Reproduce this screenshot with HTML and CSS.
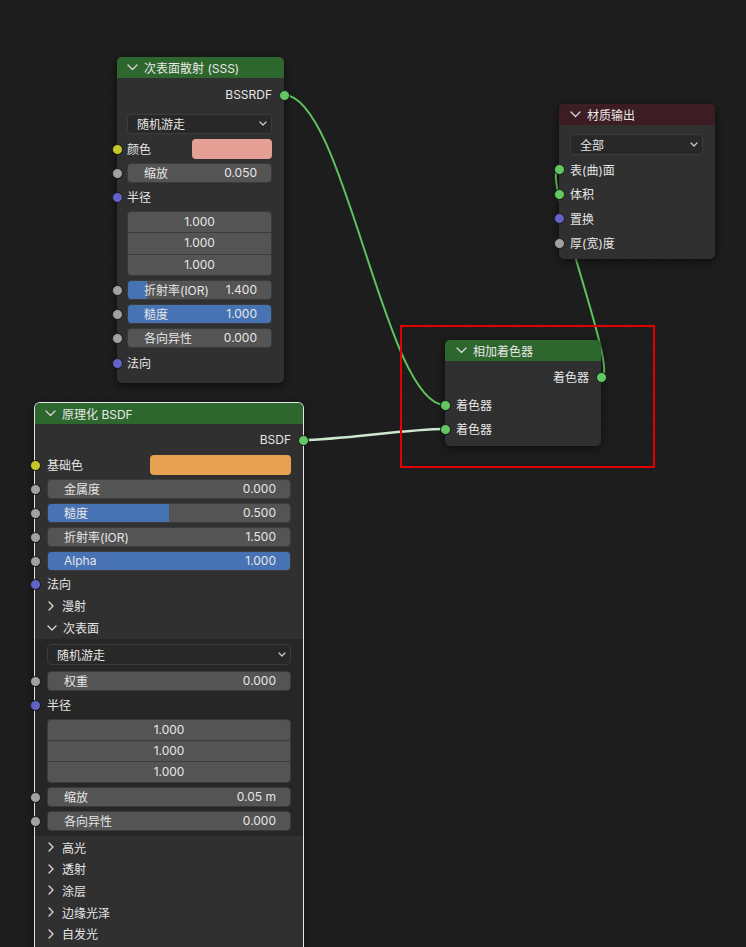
FILE: index.html
```html
<!DOCTYPE html>
<html lang="zh">
<head>
<meta charset="utf-8">
<title>Shader Nodes</title>
<link rel="stylesheet" href="styles.css">
</head>
<body>
<div class="canvas">
  <svg class="links" width="746" height="947" viewBox="0 0 746 947">
    <path class="link" d="M284 95 C344 95 385 405 445 405"/>
    <path class="link sel" d="M302 440 C342 440 405 429 445 429"/>
    <path class="link" d="M601 377 C621 377 539 169 559 169"/>
  </svg>

  <div class="frame-mark"></div>

  <!-- SSS node -->
  <div class="node n-sss">
    <div class="head">
      <svg class="chev-down" width="11" height="7" viewBox="0 0 11 7"><polyline points="1,1 5.5,5.5 10,1"/></svg>
      <span>次表面散射 (SSS)</span>
    </div>
    <div class="body">
      <div class="row right tall"><span>BSSRDF</span><i class="sock r green"></i></div>
      <div class="row mt4"><div class="drop"><span>随机游走</span><svg class="dd" width="8" height="5" viewBox="0 0 8 5"><polyline points="1,1 4,4 7,1"/></svg></div></div>
      <div class="row mt1"><i class="sock yellow"></i><span>颜色</span><span class="swatch sw-sss"></span></div>
      <div class="row"><i class="sock gray"></i><div class="field"><span>缩放</span><span>0.050</span></div></div>
      <div class="row"><i class="sock purple"></i><span>半径</span></div>
      <div class="vec"><div>1.000</div><div>1.000</div><div>1.000</div></div>
      <div class="row"><i class="sock gray"></i><div class="field" style="--p:13%"><span>折射率(IOR)</span><span>1.400</span></div></div>
      <div class="row"><i class="sock gray"></i><div class="field" style="--p:100%"><span>糙度</span><span>1.000</span></div></div>
      <div class="row"><i class="sock gray"></i><div class="field"><span>各向异性</span><span>0.000</span></div></div>
      <div class="row mt1"><i class="sock purple"></i><span>法向</span></div>
    </div>
  </div>

  <!-- Material output -->
  <div class="node n-out">
    <div class="head out">
      <svg class="chev-down" width="11" height="7" viewBox="0 0 11 7"><polyline points="1,1 5.5,5.5 10,1"/></svg>
      <span>材质输出</span>
    </div>
    <div class="body">
      <div class="row h21"><div class="drop"><span>全部</span><svg class="dd" width="8" height="5" viewBox="0 0 8 5"><polyline points="1,1 4,4 7,1"/></svg></div></div>
      <div class="row"><i class="sock green"></i><span>表(曲)面</span></div>
      <div class="row"><i class="sock green"></i><span>体积</span></div>
      <div class="row"><i class="sock purple"></i><span>置换</span></div>
      <div class="row"><i class="sock gray"></i><span>厚(宽)度</span></div>
    </div>
  </div>

  <!-- Add shader -->
  <div class="node n-add">
    <div class="head">
      <svg class="chev-down" width="11" height="7" viewBox="0 0 11 7"><polyline points="1,1 5.5,5.5 10,1"/></svg>
      <span>相加着色器</span>
    </div>
    <div class="body">
      <div class="row right"><span>着色器</span><i class="sock r green"></i></div>
      <div class="row mt4"><i class="sock green"></i><span>着色器</span></div>
      <div class="row"><i class="sock green"></i><span>着色器</span></div>
    </div>
  </div>

  <!-- Principled BSDF -->
  <div class="node n-bsdf selected">
    <div class="head">
      <svg class="chev-down" width="11" height="7" viewBox="0 0 11 7"><polyline points="1,1 5.5,5.5 10,1"/></svg>
      <span>原理化 BSDF</span>
    </div>
    <div class="body">
      <div class="row right"><span>BSDF</span><i class="sock r green"></i></div>
      <div class="row mt1"><i class="sock yellow"></i><span>基础色</span><span class="swatch sw-base"></span></div>
      <div class="row"><i class="sock gray"></i><div class="field"><span>金属度</span><span>0.000</span></div></div>
      <div class="row"><i class="sock gray"></i><div class="field" style="--p:50%"><span>糙度</span><span>0.500</span></div></div>
      <div class="row"><i class="sock gray"></i><div class="field"><span>折射率(IOR)</span><span>1.500</span></div></div>
      <div class="row"><i class="sock gray"></i><div class="field" style="--p:100%"><span>Alpha</span><span>1.000</span></div></div>
      <div class="row short"><i class="sock purple"></i><span>法向</span></div>
      <div class="row short ph"><svg class="chev-right" width="6" height="10" viewBox="0 0 6 10"><polyline points="1,1 5,5 1,9"/></svg><span>漫射</span></div>
      <div class="row short ph"><svg class="chev-open" width="10" height="6" viewBox="0 0 10 6"><polyline points="1,1 5,5 9,1"/></svg><span>次表面</span></div>
      <div class="panel">
        <div class="row h21"><div class="drop"><span>随机游走</span><svg class="dd" width="8" height="5" viewBox="0 0 8 5"><polyline points="1,1 4,4 7,1"/></svg></div></div>
        <div class="row mt2"><i class="sock gray"></i><div class="field"><span>权重</span><span>0.000</span></div></div>
        <div class="row"><i class="sock purple"></i><span>半径</span></div>
        <div class="vec v64"><div>1.000</div><div>1.000</div><div>1.000</div></div>
        <div class="row"><i class="sock gray"></i><div class="field"><span>缩放</span><span>0.05 m</span></div></div>
        <div class="row"><i class="sock gray"></i><div class="field"><span>各向异性</span><span>0.000</span></div></div>
      </div>
      <div class="ph-group">
        <div class="row ph"><svg class="chev-right" width="6" height="10" viewBox="0 0 6 10"><polyline points="1,1 5,5 1,9"/></svg><span>高光</span></div>
        <div class="row ph"><svg class="chev-right" width="6" height="10" viewBox="0 0 6 10"><polyline points="1,1 5,5 1,9"/></svg><span>透射</span></div>
        <div class="row ph"><svg class="chev-right" width="6" height="10" viewBox="0 0 6 10"><polyline points="1,1 5,5 1,9"/></svg><span>涂层</span></div>
        <div class="row ph"><svg class="chev-right" width="6" height="10" viewBox="0 0 6 10"><polyline points="1,1 5,5 1,9"/></svg><span>边缘光泽</span></div>
        <div class="row ph"><svg class="chev-right" width="6" height="10" viewBox="0 0 6 10"><polyline points="1,1 5,5 1,9"/></svg><span>自发光</span></div>
      </div>
    </div>
  </div>
</div>
</body>
</html>
```

FILE: styles.css
```css
* { box-sizing: border-box; margin: 0; padding: 0; }

html, body {
  width: 746px;
  height: 947px;
  overflow: hidden;
  background: #1d1d1d;
}

body {
  font-family: Inter, "Noto Sans CJK SC", sans-serif;
  font-size: 12px;
  color: #e6e6e6;
}

.canvas {
  position: relative;
  width: 746px;
  height: 947px;
  background-color: #1d1d1d;
  background-image: radial-gradient(circle, #232323 0.9px, transparent 1.4px);
  background-size: 22.4px 22.4px;
  background-position: -11.2px 2.8px;
}

.links {
  position: absolute;
  left: 0;
  top: 0;
  z-index: 0;
}

.link {
  fill: none;
  stroke: #5ec35e;
  stroke-width: 2;
}

.link.sel {
  stroke: #cde8cd;
  stroke-width: 2.6;
}

.frame-mark {
  position: absolute;
  left: 400px;
  top: 325px;
  width: 255px;
  height: 143px;
  border: 2px solid #e30000;
  z-index: 3;
}

/* ---------- nodes ---------- */
.node {
  position: absolute;
  z-index: 1;
  background: #303030;
  border-radius: 5px;
  box-shadow: 0 2px 9px rgba(0, 0, 0, 0.6);
  --pl: 11px;
  --pr: 12px;
}

.node.selected {
  box-shadow: 0 0 0 1px #e4e4e4, 0 2px 9px rgba(0, 0, 0, 0.6);
}

.n-sss { left: 117px; top: 57px; width: 167px; --pl: 10px; }
.n-out { left: 559px; top: 104px; width: 156px; }
.n-add { left: 445px; top: 340px; width: 156px; }
.n-bsdf { left: 35px; top: 403px; width: 268px; height: 560px; --pl: 12px; }

.head {
  height: 21px;
  display: flex;
  align-items: center;
  gap: 6px;
  padding-left: 10px;
  padding-bottom: 1px;
  border-radius: 5px 5px 0 0;
  background: #2d672e;
  color: #e8e8e8;
}

.n-out .head, .n-add .head { padding-left: 11px; }

.head.out { background: #3d1d24; }

.chev-down polyline,
.chev-right polyline,
.chev-open polyline,
.dd polyline {
  fill: none;
  stroke: #d8d8d8;
  stroke-width: 1.3;
  stroke-linecap: round;
  stroke-linejoin: round;
}

.dd polyline { stroke: #cfcfcf; stroke-width: 1.2; }

.body {
  display: flex;
  flex-direction: column;
  gap: 4px;
  padding: 6px var(--pr) 10px var(--pl);
}

.n-out .body { padding: 9px 12px 6px 11px; gap: 4.5px; }
.n-add .body { padding: 6px 12px 7px 11px; }
.n-bsdf .body { padding: 6px 12px 0 12px; }

.row {
  position: relative;
  height: 20px;
  display: flex;
  align-items: center;
  flex-shrink: 0;
  padding-bottom: 1px;
}

.row.tall { height: 22px; }
.row.h21 { height: 21px; }
.row.short { height: 18px; }
.row.right { justify-content: flex-end; }

.mt1 { margin-top: 1px; }
.mt2 { margin-top: 2px; }
.mt4 { margin-top: 4px; }

/* sockets sit on the node's edge */
.sock {
  position: absolute;
  top: 50%;
  left: calc(-1 * var(--pl) - 5.5px);
  width: 11px;
  height: 11px;
  margin-top: -5.5px;
  border-radius: 50%;
  border: 1px solid #151515;
}

.sock.r {
  left: auto;
  right: calc(-1 * var(--pr) - 5.5px);
}

.green { background: #63c763; }
.yellow { background: #c7c729; }
.gray { background: #a1a1a1; }
.purple { background: #6363c7; }

.swatch {
  margin-left: auto;
  height: 20px;
  border-radius: 4px;
}

.sw-sss { width: 80px; background: #e69f95; }
.sw-base { width: 141px; background: #e8a053; }

.field {
  flex: 1;
  height: 20px;
  border-radius: 4px;
  border: 1px solid #3b3b3b;
  background: linear-gradient(90deg, #4772b3 var(--p, 0%), #545454 var(--p, 0%));
  display: flex;
  align-items: center;
  justify-content: space-between;
  padding: 0 14px 1px 16px;
  color: #e6e6e6;
}

.row:has(.field), .row:has(.drop) { padding-bottom: 0; }

.drop {
  flex: 1;
  height: 100%;
  border-radius: 4px;
  background: #282828;
  border: 1px solid #3c3c3c;
  display: flex;
  align-items: center;
  justify-content: space-between;
  padding: 0 4px 1px 9px;
}

.vec {
  height: 65px;
  flex-shrink: 0;
  border-radius: 4px;
  background: #545454;
  border: 1px solid #3b3b3b;
  display: flex;
  flex-direction: column;
  color: #e6e6e6;
}

.vec.v64 { height: 64px; }

.vec div {
  flex: 1;
  display: flex;
  align-items: center;
  justify-content: center;
  padding-bottom: 1px;
}

.vec div + div { border-top: 1px solid #3b3b3b; }

.ph { gap: 8px; padding-left: 1px; }
.ph .chev-open { margin-left: -1px; margin-right: -2px; }

.panel {
  margin: -2px -12px 0;
  padding: 5px 12px 5px;
  background: #262626;
  display: flex;
  flex-direction: column;
  gap: 4px;
}

.ph-group {
  margin-top: -3px;
  display: flex;
  flex-direction: column;
}

.ph-group .row { height: 21.6px; }
```
